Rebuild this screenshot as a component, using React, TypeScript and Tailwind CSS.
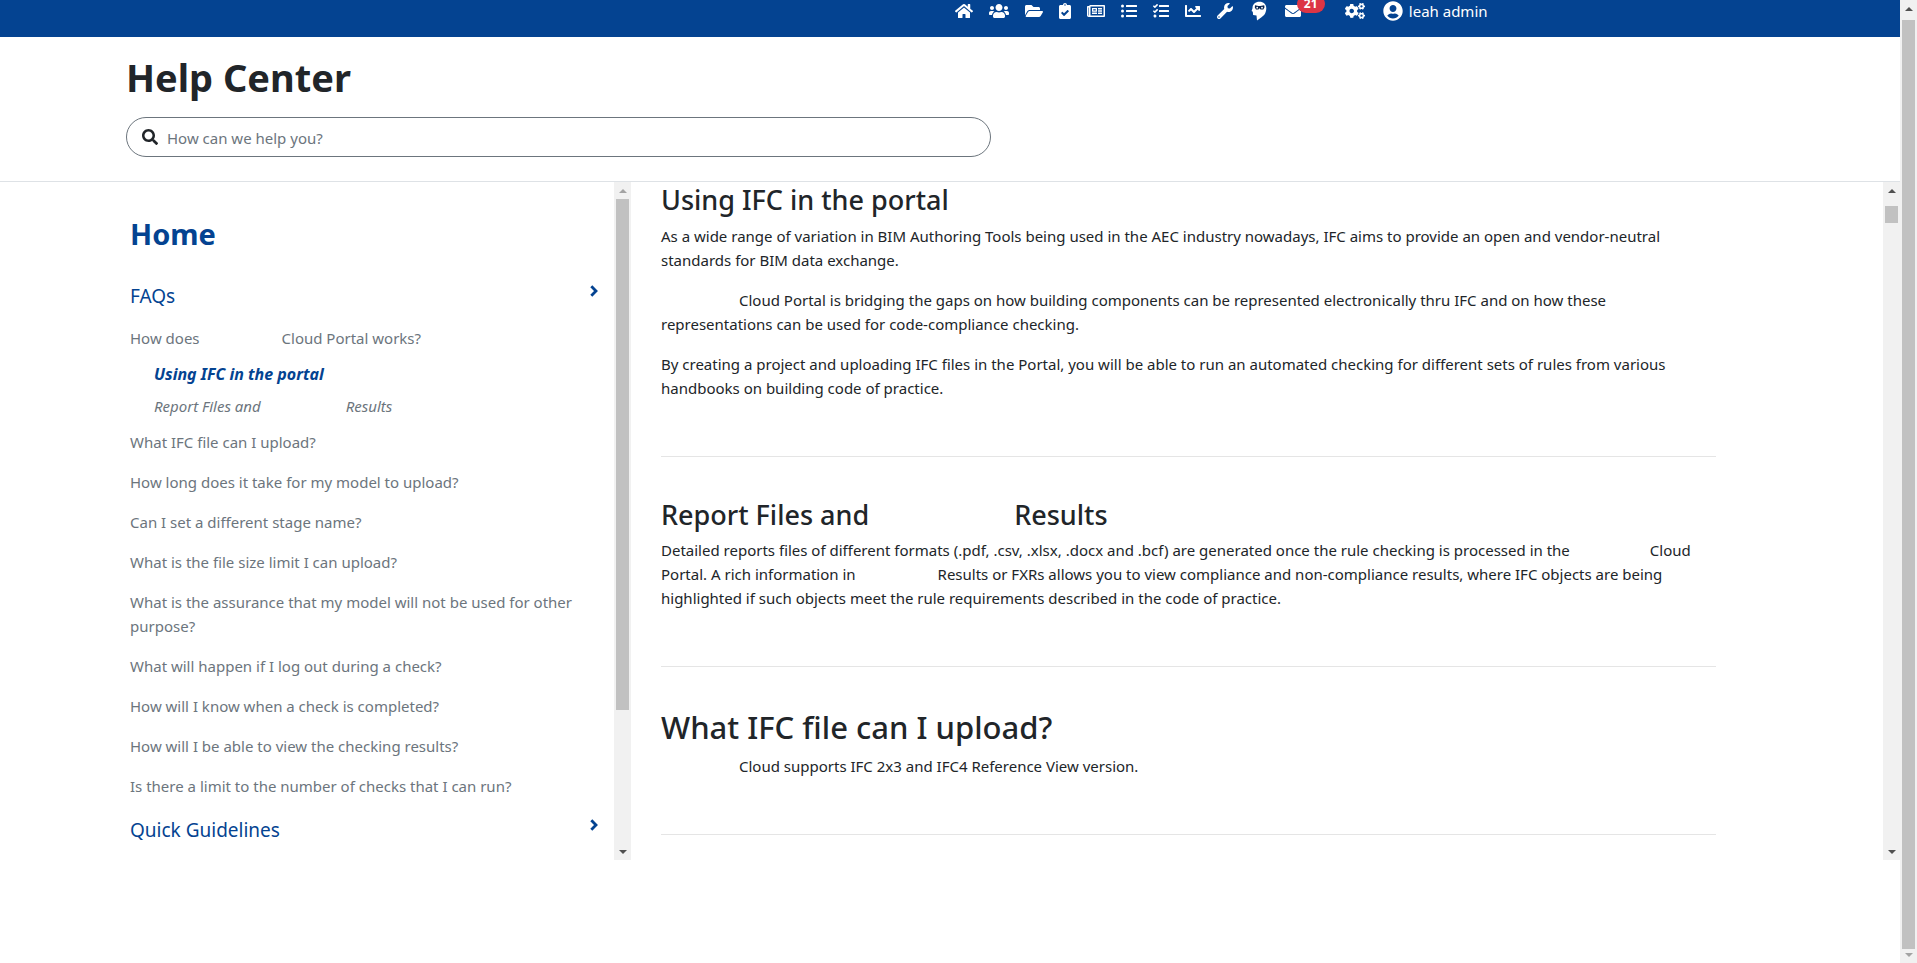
import type { ReactNode } from "react";
import {
  FaChartLine,
  FaCogs,
  FaEnvelope,
  FaFolderOpen,
  FaHome,
  FaListUl,
  FaRegNewspaper,
  FaSearch,
  FaTasks,
  FaUserCircle,
  FaUsers,
  FaWrench,
} from "react-icons/fa";

function Blank({ className }: { className: string }) {
  return <span aria-hidden="true" className={`inline-block ${className}`} />;
}

function BotHead() {
  return (
    <svg viewBox="0 0 16 20" className="h-5 w-4" fill="currentColor" aria-hidden="true">
      <path d="M8.500.8C4.300.8 1.500 3.500 1.500 7.200L.6 10l1.200.8.300 3.200 3.400.6L6 19.500l4.500-3.300 2.600-2.200c1.300-1.600 2.200-4 2.200-6.800C15.300 3.500 12.500.8 8.500.8z" />
      <path d="M4 4.200l3.500.9h1.800l3.900-.9.300 2-1.200 2.400H9.600l-1-1.400-1.200 1.400H5L3.800 6.400z" fill="#0a2550" />
      <circle cx="6.200" cy="6.700" r=".9" />
      <circle cx="11" cy="6.700" r=".9" />
    </svg>
  );
}

function ClipboardCheck() {
  return (
    <svg viewBox="0 0 384 512" className="h-4 w-3" fill="currentColor" aria-hidden="true">
      <path d="M336 64h-80c0-35.300-28.700-64-64-64s-64 28.700-64 64H48C21.500 64 0 85.500 0 112v352c0 26.500 21.500 48 48 48h288c26.500 0 48-21.500 48-48V112c0-26.500-21.500-48-48-48zM192 40c13.300 0 24 10.700 24 24s-10.700 24-24 24-24-10.700-24-24 10.700-24 24-24zm121.200 231.800l-143 141.800c-4.700 4.700-12.300 4.600-17-.1l-82.600-83.300c-4.700-4.700-4.600-12.300.1-17L99.100 285c4.700-4.700 12.300-4.600 17 .1l46 46.400 106-105.200c4.700-4.700 12.300-4.600 17 .1l28.200 28.400c4.700 4.800 4.600 12.300-.1 17z" />
    </svg>
  );
}

const navIcons: { label: string; icon: ReactNode; width: string }[] = [
  { label: "Home", icon: <FaHome className="h-4 w-[18px]" />, width: "w-[18px]" },
  { label: "Users", icon: <FaUsers className="h-4 w-5" />, width: "w-5" },
  { label: "Projects", icon: <FaFolderOpen className="h-4 w-[18px]" />, width: "w-[18px]" },
  { label: "Checks", icon: <ClipboardCheck />, width: "w-3" },
  { label: "News", icon: <FaRegNewspaper className="h-4 w-[18px]" />, width: "w-[18px]" },
  { label: "List", icon: <FaListUl />, width: "w-4" },
  { label: "Tasks", icon: <FaTasks />, width: "w-4" },
  { label: "Statistics", icon: <FaChartLine />, width: "w-4" },
  { label: "Tools", icon: <FaWrench />, width: "w-4" },
  { label: "Assistant", icon: <BotHead />, width: "w-5" },
];

function Scrollbar({ thumb, up = "border-b-[#505050]", down = "border-t-[#505050]" }: { thumb: string; up?: string; down?: string }) {
  return (
    <div aria-hidden="true" className="flex w-[17px] shrink-0 flex-col items-center bg-[#f1f1f1]">
      <div className="flex h-[17px] shrink-0 items-center">
        <div className={`border-x-4 border-b-4 border-x-transparent ${up}`} />
      </div>
      <div className="min-h-0 w-[13px] flex-1">
        <div className={`bg-[#c1c1c1] ${thumb}`} />
      </div>
      <div className="flex h-[17px] shrink-0 items-center">
        <div className={`border-x-4 border-t-4 border-x-transparent ${down}`} />
      </div>
    </div>
  );
}

const questions = [
  "What IFC file can I upload?",
  "How long does it take for my model to upload?",
  "Can I set a different stage name?",
  "What is the file size limit I can upload?",
  "What is the assurance that my model will not be used for other purpose?",
  "What will happen if I log out during a check?",
  "How will I know when a check is completed?",
  "How will I be able to view the checking results?",
  "Is there a limit to the number of checks that I can run?",
];

function Group({ title }: { title: string }) {
  return (
    <button type="button" className="flex w-full items-start justify-between text-left text-[19px] leading-[30px] text-[#044391]">
      {title}
      <svg viewBox="0 0 8 12" className="mt-1 h-3 w-2" fill="none" stroke="currentColor" strokeWidth="2.800" aria-hidden="true">
        <path d="M1.300 1.200 6 6l-4.700 4.800" />
      </svg>
    </button>
  );
}

export default function App() {
  return (
    <div className="flex h-screen overflow-hidden bg-white font-['Noto_Sans',sans-serif] text-[15px] leading-6 text-[#212529]">
      <div className="flex min-w-0 flex-1 flex-col">
        <header className="flex h-[37px] shrink-0 items-start bg-[#044391] pl-[50.2%] text-white">
          <nav className="flex h-[22px] items-center gap-4 pl-px text-base">
            {navIcons.map(({ label, icon, width }) => (
              <a key={label} href="#" aria-label={label} className={`flex justify-center ${width}`}>
                {icon}
              </a>
            ))}
            <a href="#" aria-label="Messages, 21 unread" className="relative flex w-11">
              <FaEnvelope />
              <span className="absolute -top-2 left-3 rounded-full bg-[#dc3545] px-[7px] text-xs leading-[18px] font-bold">21</span>
            </a>
            <a href="#" aria-label="Settings">
              <FaCogs className="h-4 w-5" />
            </a>
            <a href="#" className="flex items-center gap-1.5 pl-0.5">
              <FaUserCircle className="size-5" />
              <span className="text-[15px]">leah admin</span>
            </a>
          </nav>
        </header>

        <section className="shrink-0 border-b border-[#dee2e6] pt-4 pb-6 pl-[126px]">
          <h1 className="text-[38px] leading-12 font-bold">Help Center</h1>
          <label className="mt-4 flex h-10 w-[865px] items-center gap-[9px] rounded-full border border-[#6c757d] px-[15px]">
            <FaSearch className="size-4" aria-hidden="true" />
            <input type="search" aria-label="Search help" placeholder="How can we help you?" className="flex-1 pt-0.5 outline-none placeholder:text-[#6c757d]" />
          </label>
        </section>

        <div className="flex h-[678px] shrink-0">
          <aside className="flex w-[631px] shrink-0">
            <nav className="min-w-0 flex-1 overflow-hidden pt-8 pr-4 pl-[130px]">
              <a href="#" className="block text-[29px] leading-10 font-bold text-[#044391]">Home</a>
              <div className="mt-[27px]">
                <Group title="FAQs" />
              </div>
              <div className="mt-[15px] text-[#6c757d]">
                <a href="#">How does<Blank className="w-[82px]" />Cloud Portal works?</a>
                <div className="mt-3 flex flex-col gap-2 pl-6 italic">
                  <a href="#" className="text-base font-bold text-[#044391]">Using IFC in the portal</a>
                  <a href="#">Report Files and<Blank className="w-[85px]" />Results</a>
                </div>
                <div className="mt-3 flex flex-col gap-4 pr-2">
                  {questions.map((q) => (
                    <a key={q} href="#">{q}</a>
                  ))}
                </div>
              </div>
              <div className="mt-[17px]">
                <Group title="Quick Guidelines" />
              </div>
            </nav>
            <Scrollbar thumb="h-[511px]" up="border-b-[#a3a3a3]" />
          </aside>

          <main className="min-w-0 flex-1 overflow-hidden pl-[30px]">
            <article className="max-w-[1055px]">
              <section className="border-b border-[#e5e5e5] pb-14">
                <h3 className="text-[27px] leading-9 font-medium">Using IFC in the portal</h3>
                <div className="mt-1.5 flex flex-col gap-4">
                  <p>As a wide range of variation in BIM Authoring Tools being used in the AEC industry nowadays, IFC aims to provide an open and vendor-neutral standards for BIM data exchange.</p>
                  <p><Blank className="w-[78px]" />Cloud Portal is bridging the gaps on how building components can be represented electronically thru IFC and on how these representations can be used for code-compliance checking.</p>
                  <p>By creating a project and uploading IFC files in the Portal, you will be able to run an automated checking for different sets of rules from various handbooks on building code of practice.</p>
                </div>
              </section>
              <section className="border-b border-[#e5e5e5] pt-10 pb-14">
                <h3 className="text-[27px] leading-9 font-medium">Report Files and<Blank className="w-[145px]" />Results</h3>
                <p className="mt-[5px]">Detailed reports files of different formats (.pdf, .csv, .xlsx, .docx and .bcf) are generated once the rule checking is processed in the<Blank className="w-20" />Cloud Portal. A rich information in<Blank className="w-[82px]" />Results or FXRs allows you to view compliance and non-compliance results, where IFC objects are being highlighted if such objects meet the rule requirements described in the code of practice.</p>
              </section>
              <section className="border-b border-[#e5e5e5] pt-10 pb-14">
                <h2 className="text-[31px] leading-10 font-medium">What IFC file can I upload?</h2>
                <p className="mt-[7px]"><Blank className="w-[78px]" />Cloud supports IFC 2x3 and IFC4 Reference View version.</p>
              </section>
            </article>
          </main>
          <Scrollbar thumb="mt-[7px] h-[17px]" />
        </div>
      </div>
      <Scrollbar thumb="mt-[3px] h-[929px]" down="border-t-[#a3a3a3]" />
    </div>
  );
}
